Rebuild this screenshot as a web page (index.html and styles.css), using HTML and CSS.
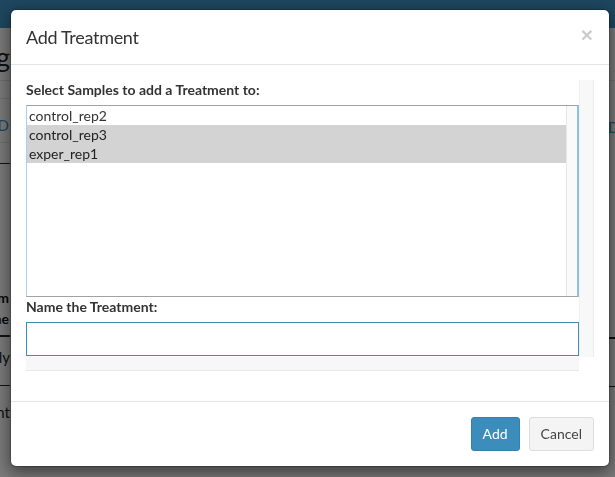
FILE: index.html
```html
<!DOCTYPE html>
<html lang="en">
<head>
<meta charset="utf-8">
<title>Add Treatment</title>
<link rel="stylesheet" href="styles.css">
</head>
<body>
<div class="page">
  <header class="navbar"></header>
  <div class="content">
    <div class="strip strip-left">
      <div class="frag h1">Editing</div>
      <div class="frag rule light"></div>
      <div class="frag gap17"></div>
      <div class="frag rule light"></div>
      <div class="frag link">D</div>
      <div class="frag rule light"></div>
      <div class="frag gap20"></div>
      <div class="frag rule dark"></div>
      <div class="frag gap123"></div>
      <div class="frag th">Treatm</div>
      <div class="frag th last">Name</div>
      <div class="frag rule dark2"></div>
      <div class="frag td">Apply</div>
      <div class="frag rule dark"></div>
      <div class="frag td tall">Treatment</div>
    </div>
    <div class="middle"></div>
    <div class="strip strip-right">
      <div class="frag gap52"></div>
      <div class="frag rule light"></div>
      <div class="frag link">D</div>
      <div class="frag gap192"></div>
      <div class="frag rule dark2"></div>
      <div class="frag gap47"></div>
      <div class="frag rule dark"></div>
    </div>
  </div>
</div>

<div class="backdrop"></div>

<div class="modal" role="dialog" aria-labelledby="modal-title">
  <div class="modal-header">
    <h4 class="modal-title" id="modal-title">Add Treatment</h4>
    <button class="close" type="button" aria-label="Close">×</button>
  </div>
  <div class="modal-body">
    <div class="scroller">
      <div class="scroll-inner">
        <label class="field-label">Select Samples to add a Treatment to:</label>
        <div class="listbox" role="listbox" aria-multiselectable="true">
          <div class="options">
            <div class="option" role="option">control_rep2</div>
            <div class="option selected" role="option" aria-selected="true">control_rep3</div>
            <div class="option selected" role="option" aria-selected="true">exper_rep1</div>
          </div>
          <div class="list-track"></div>
        </div>
        <label class="field-label">Name the Treatment:</label>
        <div class="input-wrap"><input class="text-input" type="text"></div>
      </div>
      <div class="vtrack"></div>
      <div class="htrack"></div>
      <div class="corner"></div>
    </div>
  </div>
  <div class="modal-footer">
    <button class="btn btn-primary" type="button">Add</button>
    <button class="btn btn-default" type="button">Cancel</button>
  </div>
</div>
</body>
</html>
```

FILE: styles.css
```css
* { box-sizing: border-box; }

html, body {
  margin: 0;
  padding: 0;
  height: 100%;
}

body {
  font-family: Lato, "Liberation Sans", sans-serif;
  font-size: 14px;
  line-height: 20px;
  color: #333;
  background: #f2f2f2;
  overflow: hidden;
}

/* ---------- page behind the modal ---------- */
.page {
  display: flex;
  flex-direction: column;
  height: 100%;
}

.navbar {
  height: 28px;
  background: #3c8dbc;
  flex: none;
}

.content {
  flex: 1;
  display: grid;
  grid-template-columns: 10px 1fr 8px;
}

.strip {
  overflow: hidden;
  white-space: nowrap;
}

.strip-left .frag {
  direction: rtl;
  text-align: right;
}

.frag.h1 {
  font-size: 27px;
  line-height: 30px;
  margin-top: 14px;
  height: 38px;
  color: #222;
}

.frag.rule { height: 1px; }
.frag.rule.light { background: #d9d9d9; }
.frag.rule.dark { background: #222; }
.frag.rule.dark2 { background: #222; height: 2px; }

.frag.gap17 { height: 17px; }
.frag.gap20 { height: 20px; }
.frag.gap52 { height: 52px; }
.frag.gap123 { height: 123px; }
.frag.gap192 { height: 192px; }
.frag.gap47 { height: 47px; }

.frag.link {
  color: #3c8dbc;
  font-size: 15px;
  line-height: 18px;
  padding: 17px 1px 8px 0;
}

.strip-right .frag.link { padding: 37px 0 0 1px; height: 64px; }

.frag.th {
  font-weight: 700;
  font-size: 14px;
  line-height: 21px;
  color: #111;
  padding-right: 1px;
}

.frag.th.last { margin-bottom: 6px; }

.frag.td {
  font-size: 15px;
  line-height: 20px;
  padding: 10px 0 18px;
  color: #222;
}

.frag.td.tall { padding-top: 16px; }

/* ---------- modal ---------- */
.backdrop {
  position: fixed;
  inset: 0;
  background: rgba(0, 0, 0, 0.5);
}

.modal {
  position: fixed;
  top: 9px;
  left: 10px;
  width: 600px;
  background: #fff;
  border: 1px solid rgba(0, 0, 0, 0.2);
  border-radius: 6px;
  box-shadow: 0 5px 15px rgba(0, 0, 0, 0.5);
  background-clip: padding-box;
}

.modal-header {
  display: flex;
  align-items: center;
  justify-content: space-between;
  padding: 15px;
  border-bottom: 1px solid #e5e5e5;
}

.modal-title {
  margin: 0;
  font-size: 18px;
  font-weight: 400;
  line-height: 24px;
  letter-spacing: -0.3px;
  color: #333;
}

.close {
  border: 0;
  background: transparent;
  padding: 0;
  font-family: "Liberation Sans", sans-serif;
  font-size: 21px;
  font-weight: 700;
  line-height: 1;
  color: #000;
  opacity: 0.2;
  margin-top: -6px;
  margin-right: 1px;
}

.modal-body {
  padding: 15px;
}

.scroller {
  display: grid;
  grid-template-columns: 1fr 15px;
  grid-template-rows: 277px 14px;
  margin-bottom: 15px;
}

.vtrack {
  background: #f8f8f8;
  border-left: 1px solid #f0f0f0;
  border-right: 1px solid #ececec;
}

.htrack {
  background: #f7f7f7;
  border-bottom: 1px solid #e8e8e8;
}

.corner { background: #fff; }

.scroll-inner {
  display: flex;
  flex-direction: column;
  min-width: 0;
}

.field-label {
  display: block;
  font-weight: 700;
  margin-bottom: 5px;
  color: #333;
}

.listbox {
  height: 192px;
  display: grid;
  grid-template-columns: 1fr 11px;
  border-top: 1px solid #a2a2a2;
  border-bottom: 1px solid #a2a2a2;
  border-left: 1px solid #a9d0f2;
  border-right: 2px solid #8cc0ee;
}

.options {
  min-width: 0;
}

.list-track {
  background: #fafafa;
  border-left: 1px solid #e6e6e6;
}

.option {
  padding: 0 2px;
  height: 19px;
  line-height: 19px;
  font-size: 14px;
  color: #333;
}

.option.selected {
  background: #d3d3d3;
  color: #222;
}

.input-wrap {
  height: 34px;
  border: 1px solid #3c8dbc;
  background: #fff;
}

.text-input {
  display: block;
  width: 100%;
  height: 100%;
  border: 0;
  padding: 6px 12px;
  font: inherit;
  outline: none;
  background: transparent;
}

.modal-footer {
  display: flex;
  justify-content: flex-end;
  gap: 9px;
  padding: 15px;
  border-top: 1px solid #e5e5e5;
}

.btn {
  height: 34px;
  padding: 6px 11px;
  font-family: inherit;
  font-size: 14px;
  line-height: 20px;
  border-radius: 3px;
  border: 1px solid transparent;
  cursor: pointer;
}

.btn-primary {
  background: #3c8dbc;
  border-color: #367fa9;
  color: #fff;
}

.btn-default {
  background: #f4f4f4;
  border-color: #ddd;
  color: #444;
}
```
